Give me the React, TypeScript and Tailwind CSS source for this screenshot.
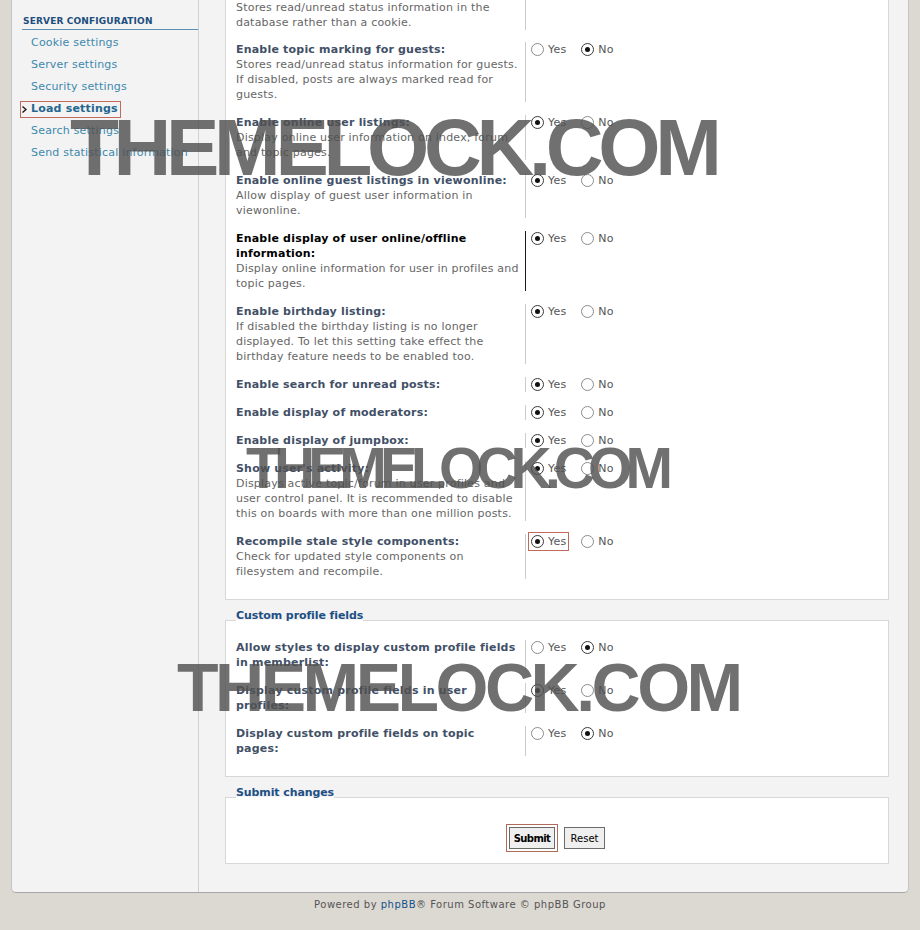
import React from "react";

type Row = {
  label: string[];
  desc: string[];
  value?: "yes" | "no";
  hover?: boolean;
  focus?: boolean;
  cut?: boolean;
};

const loadRows: Row[] = [
  {
    label: [],
    desc: ["Stores read/unread status information in the", "database rather than a cookie."],
    cut: true,
  },
  {
    label: ["Enable topic marking for guests:"],
    desc: [
      "Stores read/unread status information for guests.",
      "If disabled, posts are always marked read for",
      "guests.",
    ],
    value: "no",
  },
  {
    label: ["Enable online user listings:"],
    desc: ["Display online user information on index, forum", "and topic pages."],
    value: "yes",
  },
  {
    label: ["Enable online guest listings in viewonline:"],
    desc: ["Allow display of guest user information in", "viewonline."],
    value: "yes",
  },
  {
    label: ["Enable display of user online/offline", "information:"],
    desc: ["Display online information for user in profiles and", "topic pages."],
    value: "yes",
    hover: true,
  },
  {
    label: ["Enable birthday listing:"],
    desc: [
      "If disabled the birthday listing is no longer",
      "displayed. To let this setting take effect the",
      "birthday feature needs to be enabled too.",
    ],
    value: "yes",
  },
  { label: ["Enable search for unread posts:"], desc: [], value: "yes" },
  { label: ["Enable display of moderators:"], desc: [], value: "yes" },
  { label: ["Enable display of jumpbox:"], desc: [], value: "yes" },
  {
    label: ["Show user's activity:"],
    desc: [
      "Displays active topic/forum in user profiles and",
      "user control panel. It is recommended to disable",
      "this on boards with more than one million posts.",
    ],
    value: "yes",
  },
  {
    label: ["Recompile stale style components:"],
    desc: ["Check for updated style components on", "filesystem and recompile."],
    value: "yes",
    focus: true,
  },
];

const profileRows: Row[] = [
  { label: ["Allow styles to display custom profile fields", "in memberlist:"], desc: [], value: "no" },
  { label: ["Display custom profile fields in user", "profiles:"], desc: [], value: "yes" },
  { label: ["Display custom profile fields on topic", "pages:"], desc: [], value: "no" },
];

const menu = [
  "Cookie settings",
  "Server settings",
  "Security settings",
  "Load settings",
  "Search settings",
  "Send statistical information",
];

const Radio = ({ checked }: { checked: boolean }) => (
  <span
    className={`flex size-[13px] items-center justify-center rounded-full border bg-white ${
      checked ? "border-[#3a3a3a]" : "border-[#8c8c8c]"
    }`}
  >
    {checked && <span className="size-[5px] rounded-full bg-[#111]" />}
  </span>
);

const Choice = ({ value, focus }: { value: "yes" | "no"; focus?: boolean }) => (
  <div className="flex h-[15px] items-center text-[#555]">
    <span
      className={`flex items-center gap-[4px] ${
        focus ? "-mx-[3px] h-[19px] border border-[#c0695c] px-[2px]" : ""
      }`}
    >
      <Radio checked={value === "yes"} />
      <span>Yes</span>
    </span>
    <span className="ml-[15px] flex items-center gap-[4px]">
      <Radio checked={value === "no"} />
      <span>No</span>
    </span>
  </div>
);

const SettingRow = ({ row }: { row: Row }) => (
  <div className={`flex ${row.cut ? "pb-[5px]" : "py-[6px]"}`}>
    <div
      className={`w-[290px] shrink-0 border-r leading-[15px] ${
        row.hover ? "border-[#1a1a1a]" : "border-[#cccccc]"
      }`}
    >
      {row.label.map((l) => (
        <div
          key={l}
          className={`whitespace-nowrap font-bold ${row.hover ? "text-black" : "text-[#425067]"}`}
        >
          {l}
        </div>
      ))}
      {row.desc.map((d) => (
        <div key={d} className="whitespace-nowrap text-[#666]">
          {d}
        </div>
      ))}
    </div>
    <div className="pl-[5px] leading-[15px]">
      {row.value && <Choice value={row.value} focus={row.focus} />}
    </div>
  </div>
);

const Legend = ({ children }: { children: React.ReactNode }) => (
  <legend className="pb-[9px] text-[11px] font-bold leading-[14px] tracking-[-0.1px] text-[#1d4f84]">
    {children}
  </legend>
);

export default function App() {
  return (
    <div className="relative min-h-screen overflow-hidden bg-[#dcd8d2] text-[11px] tracking-[0.2px] font-['DejaVu_Sans',Verdana,sans-serif]">
      <div className="mx-[11px] flex rounded-b-[5px] border-x border-b border-x-[#c4c4c4] border-b-[#a6a6a6] bg-[#f3f3f3]">
        {/* Sidebar */}
        <div className="w-[187px] shrink-0 border-r border-[#d0d0d0] pl-[10px] pt-[14px]">
          <div className="border-b border-[#5f8fb3] pb-px pl-px text-[9px] font-bold uppercase leading-[14px] tracking-[0.15px] text-[#1c4e7e]">
            Server configuration
          </div>
          <ul className="mt-[2px]">
            {menu.map((m) =>
              m === "Load settings" ? (
                <li key={m} className="flex h-[22px] items-center">
                  <span className="-ml-[2px] flex h-[17px] items-center border border-[#c0695c] pr-[2px]">
                    <svg width="5" height="7" viewBox="0 0 5 7" className="ml-px">
                      <path d="M0.5 0.5 L4 3.5 L0.5 6.5" fill="none" stroke="#111" strokeWidth="1.3" />
                    </svg>
                    <span className="ml-[4px] font-bold text-[#23668f]">{m}</span>
                  </span>
                </li>
              ) : (
                <li key={m} className="h-[22px] pl-[9px] leading-[22px] text-[#3d89ad]">
                  {m}
                </li>
              )
            )}
          </ul>
        </div>

        {/* Main */}
        <div className="flex-1 pb-[28px] pl-[26px] pr-[19px]">
          <fieldset className="border border-t-0 border-[#d7d7d7] bg-white px-[10px] pb-[14px]">
            <div className="flex flex-col gap-px">
              {loadRows.map((r, i) => (
                <SettingRow key={i} row={r} />
              ))}
            </div>
          </fieldset>

          <fieldset className="mt-[9px] border border-[#d7d7d7] bg-white px-[10px] pb-[14px] pt-[2px]">
            <Legend>Custom profile fields</Legend>
            <div className="flex flex-col gap-px">
              {profileRows.map((r, i) => (
                <SettingRow key={i} row={r} />
              ))}
            </div>
          </fieldset>

          <fieldset className="mt-[9px] border border-[#d7d7d7] bg-white px-[10px] pb-[11px] pt-[15px]">
            <Legend>Submit changes</Legend>
            <div className="flex items-center justify-center gap-[6px] pr-[3px]">
              <span className="border border-[#b06a5a] p-[2px]">
                <button className="flex h-[22px] w-[46px] items-center justify-center border border-[#6b6b6b] bg-[#efefef] text-[10px] font-bold tracking-[-0.6px] text-black">
                  Submit
                </button>
              </span>
              <button className="flex h-[22px] w-[41px] items-center justify-center border border-[#6b6b6b] bg-[#efefef] text-[10px] tracking-normal text-black">
                Reset
              </button>
            </div>
          </fieldset>
        </div>
      </div>

      <div className="mt-[5px] text-center text-[10px] leading-[14px] tracking-[0.5px] text-[#555]">
        Powered by <span className="text-[#105289]">phpBB</span>® Forum Software © phpBB Group
      </div>

      {/* Watermarks */}
      <div className="pointer-events-none absolute left-[70px] top-[108px] whitespace-nowrap font-['Liberation_Sans',Arial,sans-serif] text-[80px] font-bold leading-none tracking-[-5.3px] text-[rgba(80,80,80,0.82)]">
        THEMELOCK.COM
      </div>
      <div className="pointer-events-none absolute left-[246px] top-[440px] whitespace-nowrap font-['Liberation_Sans',Arial,sans-serif] text-[57px] font-bold leading-none tracking-[-6.9px] text-[rgba(80,80,80,0.82)]">
        THEMELOCK.COM
      </div>
      <div className="pointer-events-none absolute left-[177px] top-[653px] whitespace-nowrap font-['Liberation_Sans',Arial,sans-serif] text-[68px] font-bold leading-none tracking-[-3.5px] text-[rgba(80,80,80,0.82)]">
        THEMELOCK.COM
      </div>
    </div>
  );
}
